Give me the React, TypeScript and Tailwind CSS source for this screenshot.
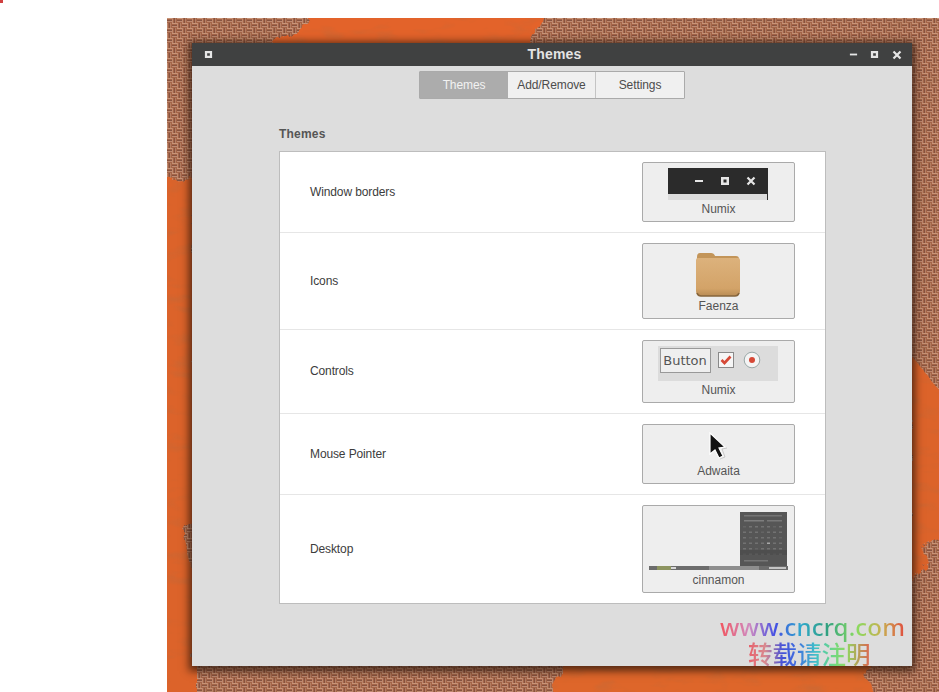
const sans = "font-['Liberation_Sans',Arial,sans-serif]"

function Wallpaper() {
  return (
    <svg className="absolute inset-0 w-full h-full" viewBox="0 0 772 674" preserveAspectRatio="none">
      <defs>
        <pattern id="weave" width="10" height="10" patternUnits="userSpaceOnUse">
          <rect width="10" height="10" fill="#a5654a" />
          {/* horizontal ridges */}
          <rect x="0" y="0" width="5" height="1" fill="#c99578" />
          <rect x="0" y="2" width="5" height="1" fill="#875240" />
          <rect x="0" y="3" width="5" height="1" fill="#bf8a70" />
          <rect x="5" y="5" width="5" height="1" fill="#c99578" />
          <rect x="5" y="7" width="5" height="1" fill="#875240" />
          <rect x="5" y="8" width="5" height="1" fill="#bf8a70" />
          {/* vertical ridges */}
          <rect x="5" y="0" width="1" height="5" fill="#bf8a70" />
          <rect x="7" y="0" width="1" height="5" fill="#875240" />
          <rect x="8" y="0" width="1" height="5" fill="#b57f64" />
          <rect x="0" y="5" width="1" height="5" fill="#bf8a70" />
          <rect x="2" y="5" width="1" height="5" fill="#875240" />
          <rect x="3" y="5" width="1" height="5" fill="#b57f64" />
        </pattern>
        <filter id="soft" x="0" y="0" width="100%" height="100%">
          <feGaussianBlur stdDeviation="0.55" />
        </filter>
        <filter id="rough" x="-5%" y="-5%" width="110%" height="110%">
          <feTurbulence type="fractalNoise" baseFrequency="0.06" numOctaves="3" seed="7" result="n" />
          <feDisplacementMap in="SourceGraphic" in2="n" scale="16" />
          <feGaussianBlur stdDeviation="0.7" />
        </filter>
        <filter id="grain" x="0" y="0" width="100%" height="100%">
          <feTurbulence type="fractalNoise" baseFrequency="0.035 0.09" numOctaves="3" seed="4" />
          <feColorMatrix values="0 0 0 0 0.35  0 0 0 0 0.16  0 0 0 0 0.07  0 0 0 1.6 -0.82" />
        </filter>
      </defs>
      <rect width="772" height="674" fill="url(#weave)" filter="url(#soft)" />
      {/* orange paint over the weave */}
      <g filter="url(#rough)">
        <path d="M150 -10 L380 -10 L352 40 L95 40 Z" fill="#e3632a" />
        <path d="M-10 163 L28 160 L28 500 L16 520 L28 565 L28 684 L-10 684 Z" fill="#dc642b" />
        <path d="M398 640 L705 640 L700 660 L712 684 L392 684 L385 664 Z" fill="#de662c" />
        <path d="M742 335 L782 385 L782 515 L755 530 L762 545 L742 560 Z" fill="#dc642b" />
      </g>
      <rect width="772" height="674" filter="url(#grain)" opacity="0.35" />
    </svg>
  )
}

function WinIcon({ kind, size = 10 }: { kind: "min" | "max" | "close"; size?: number }) {
  return (
    <svg width={size} height={size} viewBox="0 0 10 10" className="text-[#e6e6e6]">
      {kind === "min" && <rect x="1" y="4" width="8" height="2" fill="currentColor" />}
      {kind === "max" && <path d="M1 1h8v8H1z M3.5 3.5v3h3v-3z" fill="currentColor" fillRule="evenodd" />}
      {kind === "close" && <path d="M1.5 1.5l7 7M8.5 1.5l-7 7" stroke="currentColor" strokeWidth="2.2" />}
    </svg>
  )
}

function Folder() {
  return (
    <svg width="44" height="45" viewBox="0 0 44 45" className="block">
      <defs>
        <linearGradient id="folderBody" x1="0" y1="0" x2="0" y2="1">
          <stop offset="0" stopColor="#dcb27c" />
          <stop offset="0.8" stopColor="#d3a368" />
          <stop offset="1" stopColor="#b98c55" />
        </linearGradient>
      </defs>
      <path d="M1 5 Q1 1 4 1 H15 Q18 1 19 4 H40 Q43 4 43 7 V20 H1 Z" fill="#c39559" />
      <path d="M0 8 Q0 6 2 6 H42 Q44 6 44 8 V39 Q44 44 39 44 H5 Q0 44 0 39 Z" fill="url(#folderBody)" />
      <path d="M1 41 Q2 44 5 44 H39 Q42 44 43 41" fill="none" stroke="#86653c" strokeWidth="1.5" />
    </svg>
  )
}

function Pointer() {
  return (
    <svg width="22" height="30" viewBox="0 0 22 30">
      <path d="M2 1 L2 22 L7 18 L11 26 L15 24 L11 16 L17 15 Z" fill="#111" stroke="#fff" strokeWidth="1.2" />
      <path d="M12 27 L17 25 L14 17 L19 16" fill="none" stroke="#bbb" strokeWidth="1" opacity="0.7" />
    </svg>
  )
}

function DesktopPreview() {
  const cells = Array.from({ length: 42 }, (_, i) => i)
  return (
    <svg width="139" height="58" viewBox="0 0 139 58" className="block mr-[1px]">
      <rect x="91" y="0" width="47" height="54" fill="#565656" />
      <rect x="95" y="3" width="38" height="1.5" fill="#747474" />
      <rect x="95" y="8" width="20" height="1.5" fill="#7e7e7e" />
      <rect x="118" y="8" width="15" height="1.5" fill="#787878" />
      {cells.map((i) => (
        <rect
          key={i}
          x={94 + (i % 7) * 6}
          y={14 + Math.floor(i / 7) * 5.5}
          width="3"
          height="1.5"
          fill={i === 25 ? "#a8a8a8" : i % 5 === 0 ? "#646464" : "#727272"}
        />
      ))}
      <rect x="91" y="38" width="47" height="5" fill="#4a4a4a" opacity="0.6" />
      <rect x="95" y="48" width="24" height="1.5" fill="#767676" />
      <rect x="0" y="54" width="139" height="4" fill="#6c6c6c" />
      <rect x="8" y="54" width="14" height="4" fill="#8d9460" />
      <rect x="22" y="55" width="5" height="2" fill="#d8d8d8" />
      <rect x="60" y="54" width="50" height="4" fill="#8e8e8e" />
      <rect x="120" y="55" width="17" height="2" fill="#c4c4c4" />
    </svg>
  )
}

function ThemeButton({ label, h, gap, children }: { label: string; h: string; gap: string; children: React.ReactNode }) {
  return (
    <div className={`w-[153px] ${h} bg-[#eeeeee] border border-[#aaaaaa] rounded-[2px] flex flex-col items-center justify-center`}>
      {children}
      <span className={`text-[12px] leading-[14px] text-[#555] ${gap}`}>{label}</span>
    </div>
  )
}

function Row({ title, last, up, children }: { title: string; last?: boolean; up?: boolean; children: React.ReactNode }) {
  return (
    <div className={`flex items-center justify-between pl-[30px] pr-[30px] py-[10px] ${last ? "" : "border-b border-[#e6e6e6]"}`}>
      <span className={`text-[12px] tracking-[-0.12px] text-[#3c3c3c] ${up ? "-mt-[2px]" : ""}`}>{title}</span>
      {children}
    </div>
  )
}

export default function App() {
  return (
    <div className={`relative w-[939px] h-[692px] overflow-hidden bg-white pt-[18px] pl-[167px] ${sans}`}>
      <div className="absolute left-0 top-0 w-[3px] h-[3px] bg-[#d04040]" />
      <div className="relative w-[772px] h-[674px]">
        <Wallpaper />
        <div className="absolute left-[25px] top-[25px] w-[720px] h-[623px] bg-[#dddddd] flex flex-col shadow-[0_2px_8px_3px_rgba(40,20,10,0.75)]">
          <div className="h-[23px] shrink-0 bg-[#404141] flex items-center justify-between pl-[12px] pr-[10px] relative">
            <WinIcon kind="max" size={9} />
            <span className="absolute left-0 right-0 pl-[5px] text-center text-[14px] font-bold tracking-[0.2px] text-[#e4e4e4]">Themes</span>
            <div className="flex items-center gap-[12px]">
              <WinIcon kind="min" size={9} />
              <WinIcon kind="max" size={9} />
              <div className="ml-[1px] flex">
                <WinIcon kind="close" size={10} />
              </div>
            </div>
          </div>

          <div className="flex justify-center mt-[5px]">
            <div className="flex h-[28px] text-[12px] tracking-[-0.1px] border border-[#aaaaaa] rounded-[1px]">
              <div className="w-[88px] bg-[#acacac] text-[#f2f2f2] flex items-center justify-center">Themes</div>
              <div className="w-[88px] bg-[#f0f0f0] text-[#4c4c4c] border-r border-[#c4c4c4] flex items-center justify-center">Add/Remove</div>
              <div className="w-[88px] bg-[#f0f0f0] text-[#4c4c4c] flex items-center justify-center">Settings</div>
            </div>
          </div>

          <div className="ml-[87px] mr-[86px] mt-[28px]">
            <div className="text-[12px] leading-[14px] tracking-[0.2px] font-bold text-[#555] mb-[10px]">Themes</div>
            <div className="bg-white border border-[#bdbdbd]">
              <Row title="Window borders">
                <ThemeButton label="Numix" h="h-[60px]" gap="mt-[2px]">
                  <div className="w-[100px] h-[32px] bg-[#dcdcdc] relative mr-[2px]">
                    <div className="h-[26px] bg-[#2b2b2b] flex items-center justify-end pr-[12px] gap-[16px]">
                      <WinIcon kind="min" />
                      <WinIcon kind="max" />
                      <WinIcon kind="close" />
                    </div>
                    <div className="absolute right-0 top-[26px] w-[1px] h-[6px] bg-[#2b2b2b]" />
                  </div>
                </ThemeButton>
              </Row>
              <Row title="Icons">
                <ThemeButton label="Faenza" h="h-[76px]" gap="mt-[2px]">
                  <div className="mr-[1px] mt-[3px]">
                    <Folder />
                  </div>
                </ThemeButton>
              </Row>
              <Row title="Controls" up>
                <ThemeButton label="Numix" h="h-[63px]" gap="mt-[1px]">
                  <div className="w-[120px] h-[35px] bg-[#dcdcdc] flex items-start pt-[2px] pl-[2px] mb-[1px] mr-[2px]">
                    <div className="w-[51px] h-[25px] border border-[#999] bg-[#efefef] text-[13px] text-[#555] flex items-center justify-center font-['DejaVu_Sans',sans-serif]">Button</div>
                    <svg width="16" height="16" viewBox="0 0 16 16" className="ml-[7px] mt-[4px]">
                      <rect x="0.5" y="0.5" width="15" height="15" fill="#f6f6f6" stroke="#8a8a8a" />
                      <path d="M3.5 8 L6.5 11 L12.5 4.5" fill="none" stroke="#d64937" strokeWidth="2.6" />
                    </svg>
                    <svg width="18" height="18" viewBox="0 0 18 18" className="ml-[9px] mt-[3px]">
                      <circle cx="9" cy="9" r="7.8" fill="#f4f4f4" stroke="#9aa8a8" />
                      <circle cx="9" cy="9" r="3" fill="#d64937" />
                    </svg>
                  </div>
                </ThemeButton>
              </Row>
              <Row title="Mouse Pointer">
                <ThemeButton label="Adwaita" h="h-[60px]" gap="mt-[3px]">
                  <div className="w-[30px] h-[30px] pl-[4px] pt-[1px]">
                    <Pointer />
                  </div>
                </ThemeButton>
              </Row>
              <Row title="Desktop" last>
                <ThemeButton label="cinnamon" h="h-[88px]" gap="mt-[3px]">
                  <DesktopPreview />
                </ThemeButton>
              </Row>
            </div>
          </div>
        </div>
      </div>

      {/* site watermark sits on top of the window */}
      <div className="absolute left-[720px] top-[612px] font-['Noto_Sans','Noto_Sans_CJK_SC',sans-serif] font-medium">
        <div className="w-[184px] text-[24px] leading-[30px] tracking-[0.2px] whitespace-nowrap text-transparent bg-clip-text bg-[linear-gradient(90deg,#f2555f_0%,#d08ac0_16%,#4450e4_30%,#2fa8cc_44%,#30a080_58%,#88dc60_74%,#c8b050_88%,#e0503f_100%)]">www.cncrq.com</div>
        <div className="w-[123px] ml-[28px] -mt-[1px] text-[24.5px] leading-[25px] whitespace-nowrap text-transparent bg-clip-text bg-[linear-gradient(90deg,#e8606a_0%,#d88a90_14%,#4450d8_28%,#4070e0_40%,#40c0c8_55%,#70d880_70%,#90d860_80%,#e06050_100%)] font-['Noto_Sans_CJK_SC',sans-serif]">转载请注明</div>
      </div>
    </div>
  )
}
